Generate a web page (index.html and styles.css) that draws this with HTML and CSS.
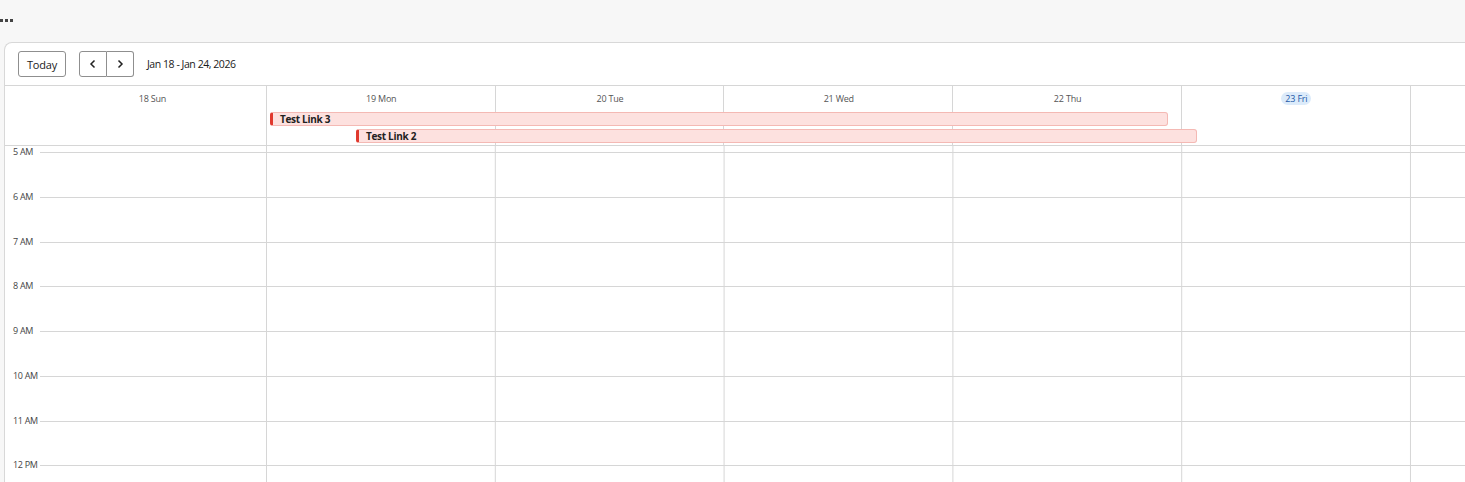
FILE: index.html
```html
<!DOCTYPE html>
<html>
<head>
<meta charset="utf-8">
<link rel="stylesheet" href="styles.css">
</head>
<body>
<div class="topbar"><span class="dots"><i></i><i></i><i></i></span></div>
<div class="card">
  <div class="toolbar">
    <button class="btn today">Today</button>
    <div class="navgroup">
      <button class="btn nav"><svg width="8" height="10" viewBox="0 0 8 10"><path d="M5.5 1.5 2 5l3.5 3.5" fill="none" stroke="#222" stroke-width="1.5"/></svg></button>
      <button class="btn nav"><svg width="8" height="10" viewBox="0 0 8 10"><path d="M2.5 1.5 6 5 2.5 8.5" fill="none" stroke="#222" stroke-width="1.5"/></svg></button>
    </div>
    <span class="range">Jan 18 - Jan 24, 2026</span>
  </div>
  <div class="head">
    <div class="gutter"></div>
    <div class="day first"><span>18 Sun</span></div>
    <div class="day"><span>19 Mon</span></div>
    <div class="day"><span>20 Tue</span></div>
    <div class="day"><span>21 Wed</span></div>
    <div class="day"><span>22 Thu</span></div>
    <div class="day"><span class="now">23 Fri</span></div>
    <div class="day"></div>
    <div class="event" style="top:26px;left:265px;width:898px">Test Link 3</div>
    <div class="event" style="top:43px;left:351px;width:841px">Test Link 2</div>
  </div>
  <div class="body">
    <div class="hour"><span class="lbl">5 AM</span><span class="line"></span></div>
    <div class="hour"><span class="lbl">6 AM</span><span class="line"></span></div>
    <div class="hour"><span class="lbl">7 AM</span><span class="line"></span></div>
    <div class="hour"><span class="lbl">8 AM</span><span class="line"></span></div>
    <div class="hour"><span class="lbl">9 AM</span><span class="line"></span></div>
    <div class="hour"><span class="lbl">10 AM</span><span class="line"></span></div>
    <div class="hour"><span class="lbl">11 AM</span><span class="line"></span></div>
    <div class="hour"><span class="lbl">12 PM</span><span class="line"></span></div>
  </div>
</div>
</body>
</html>
```
FILE: styles.css
```css
html, body { margin: 0; padding: 0; }
body {
  background: #f7f7f7;
  font-family: "Open Sans", "Liberation Sans", sans-serif;
  color: #222;
  width: 1465px;
  height: 482px;
  overflow: hidden;
}
.topbar { height: 42px; }
.dots { display: flex; gap: 2px; padding: 19px 0 0 0; }
.dots i { width: 3px; height: 3px; background: #444; display: block; }
.card {
  margin-left: 4px;
  background: #fff;
  border: 1px solid #d8d8d8;
  border-right: none;
  border-bottom: none;
  border-radius: 8px 0 0 0;
  height: 440px;
  overflow: hidden;
}
.toolbar {
  height: 42px;
  display: flex;
  align-items: center;
  padding-left: 13px;
  box-sizing: border-box;
}
.btn {
  font-family: inherit;
  background: #fff;
  border: 1px solid #8f8f8f;
  border-radius: 3px;
  height: 26px;
  box-sizing: border-box;
  padding: 0;
  color: #222;
  cursor: pointer;
}
.today { width: 48px; font-size: 11px; letter-spacing: -0.2px; }
.navgroup { display: flex; margin-left: 13px; }
.nav { width: 28px; display: flex; align-items: center; justify-content: center; }
.nav:first-child { border-radius: 3px 0 0 3px; }
.nav:last-child { border-radius: 0 3px 3px 0; border-left: none; width: 27px; }
.range { margin-left: 13px; font-size: 10.5px; letter-spacing: -0.45px; color: #1a1a1a; }
.head {
  position: relative;
  display: grid;
  grid-template-columns: 33px repeat(7, 228.8px);
  height: 61px;
  border-top: 1px solid #d6d6d6;
  border-bottom: 1px solid #d6d6d6;
  box-sizing: border-box;
}
.day {
  border-left: 1px solid #d6d6d6;
  margin-left: -1px;
  text-align: center;
  font-size: 9px;
  color: #555;
  padding-top: 6px;
  line-height: 13px;
  letter-spacing: -0.2px;
}
.day.first { border-left: none; margin-left: 0; }
.day span { display: inline-block; padding: 0 3px; }
.day .now {
  background: #dcebfa;
  color: #1f5aa8;
  border-radius: 7px;
  padding: 0 4px;
}
.event {
  position: absolute;
  height: 14px;
  box-sizing: border-box;
  background: #fde1df;
  border: 1px solid #f4b9b4;
  border-left: 3px solid #e0392e;
  border-radius: 3px;
  font-size: 10px;
  font-weight: 700;
  line-height: 12px;
  letter-spacing: -0.3px;
  padding-left: 7px;
  color: #222;
  white-space: nowrap;
}
.body {
  padding-top: 6px;
  background-image: linear-gradient(#fff, #fff), linear-gradient(to right, #d6d6d6 1px, transparent 1px);
  background-size: 40px 100%, 228.8px 100%;
  background-repeat: no-repeat, repeat;
  background-position: 0 0, 261px 0;
  height: 400px;
}
.hour { display: flex; height: 44.75px; }
.lbl {
  width: 35px;
  padding-left: 8px;
  box-sizing: border-box;
  font-size: 9px;
  line-height: 12px;
  color: #444;
  letter-spacing: -0.3px;
  white-space: nowrap;
  transform: translateY(-6px);
}
.line { flex: 1; border-top: 1px solid #d6d6d6; height: 0; }
```
